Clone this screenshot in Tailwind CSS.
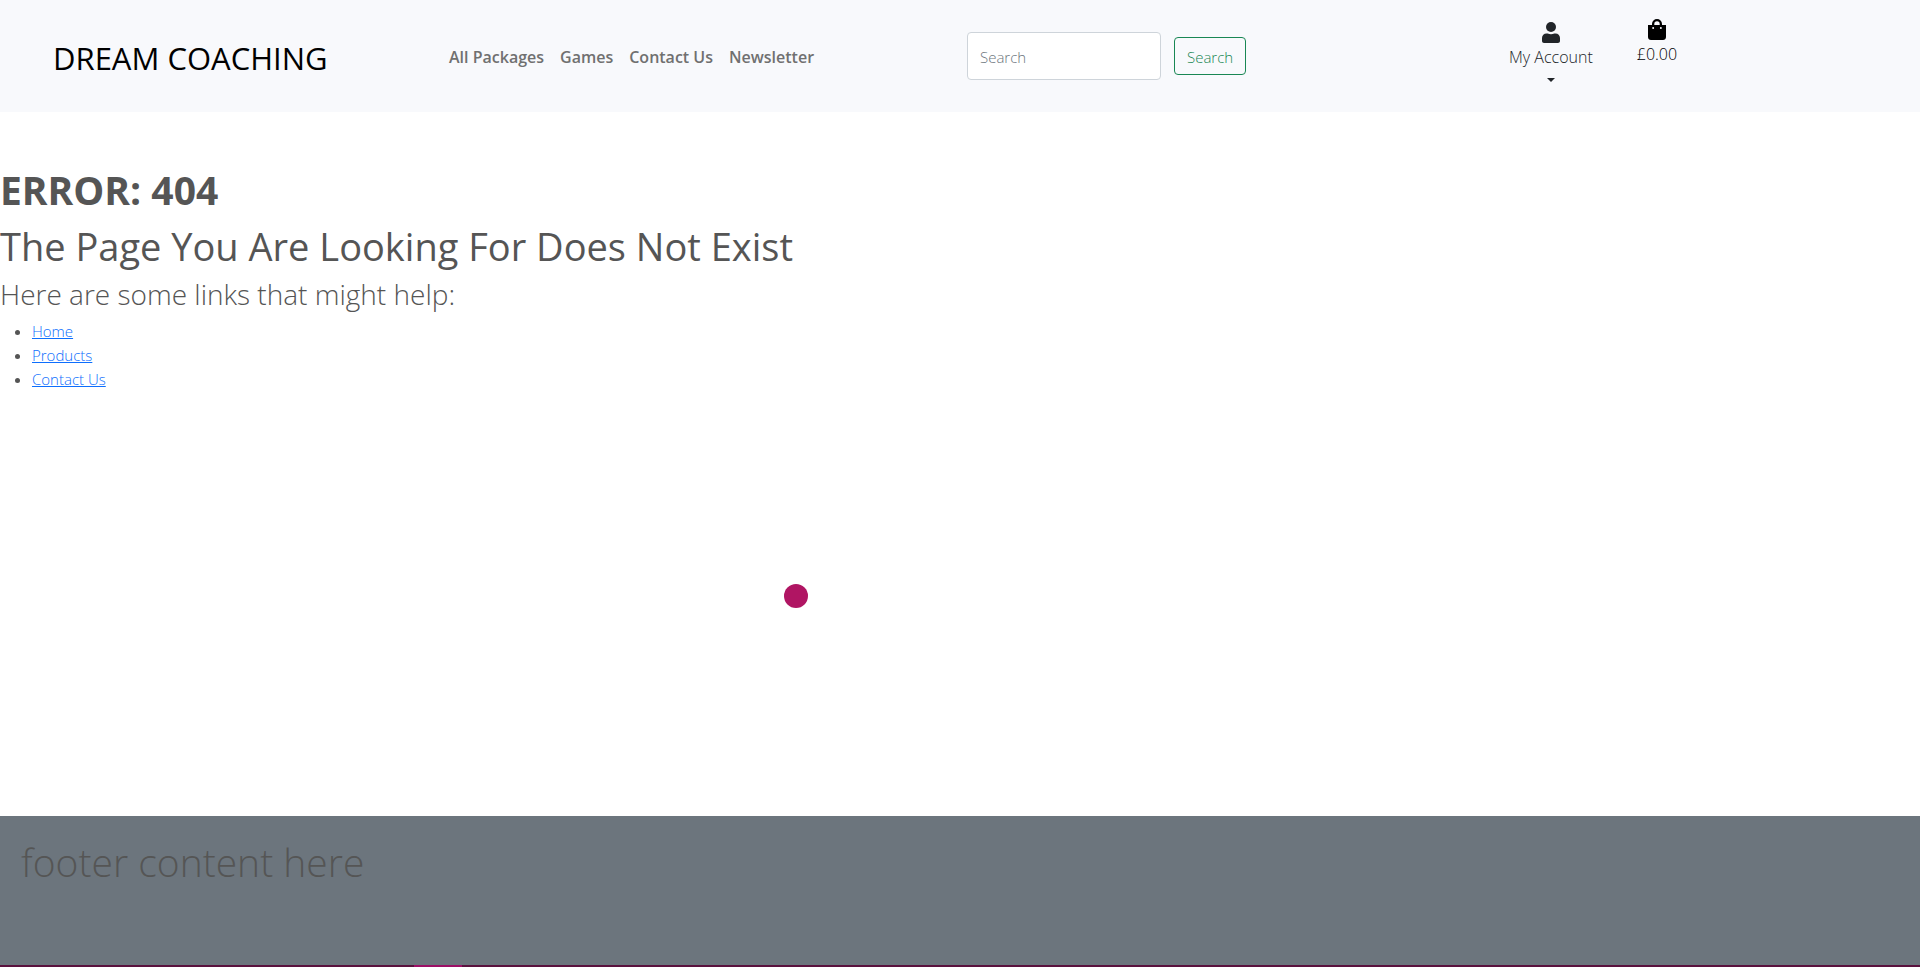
<!DOCTYPE html>
<html lang="en">
<head>
<meta charset="utf-8">
<title>Dream Coaching</title>
<script src="https://cdn.jsdelivr.net/npm/@tailwindcss/browser@4"></script>
</head>
<body class="relative flex min-h-screen flex-col overflow-x-hidden bg-white font-['Open_Sans','Noto_Sans',sans-serif] text-[#555555]">
<header class="flex h-28 items-center bg-[#f8f9fc]">
  <div class="w-[449px] pt-[3px] pl-[53px]"><a href="#" class="text-[31px] leading-10 text-black">DREAM COACHING</a></div>
  <nav class="flex w-[518px] gap-4 pt-[2px] text-base leading-6 font-semibold text-[#707070]">
    <a href="#">All Packages</a><a href="#">Games</a><a href="#">Contact Us</a><a href="#">Newsletter</a>
  </nav>
  <form class="flex w-[542px] items-center gap-[13px]" onsubmit="return false">
    <input type="search" aria-label="Search" placeholder="Search" class="h-12 w-[194px] rounded border border-[#ced4da] bg-white px-3 pt-[2px] text-[15px] font-light placeholder:text-[#6c757d]">
    <button type="submit" class="h-[38px] rounded border border-[#198754] px-3 pt-[2px] text-[15px] leading-6 font-light text-[#198754]">Search</button>
  </form>
  <div class="flex items-start gap-11 self-start pt-[19px] text-base leading-6 font-light">
    <button type="button" class="flex flex-col items-center pt-[3px] text-[#212529]">
      <svg class="h-[21px] w-[18px]" viewBox="0 0 18 21" fill="currentColor" aria-hidden="true"><circle cx="9" cy="5" r="5"/><path d="M4.500 11.500h1.200c2 1 4.600 1 6.600 0h1.200C16 11.500 18 13.500 18 16v3c0 1.100-.9 2-2 2H2c-1.100 0-2-.9-2-2v-3c0-2.500 2-4.500 4.500-4.500z"/></svg>
      <span class="mt-[2px]">My Account</span>
      <svg class="mt-[9px] h-1 w-2" viewBox="0 0 8 4" fill="currentColor" aria-hidden="true"><path d="M0 0h8L4 4z"/></svg>
    </button>
    <a href="#" class="flex flex-col items-center text-black">
      <svg class="h-[21px] w-[18px]" viewBox="0 0 18 21" fill="currentColor" aria-hidden="true"><path fill-rule="evenodd" d="M4 6V5a5 5 0 0 1 10 0v1h4V18c0 1.700-1.300 3-3 3H3c-1.700 0-3-1.300-3-3V6zM6.300 6h5.400V5a2.700 2.700 0 0 0-5.400 0zM5.150 8a1 1 0 1 0 0 2 1 1 0 0 0 0-2zM12.850 8a1 1 0 1 0 0 2 1 1 0 0 0 0-2z"/></svg>
      <span class="mt-[2px]">£0.00</span>
    </a>
  </div>
</header>
<main class="flex-1 pt-[54px]">
  <h1 class="mb-2 text-[39px] leading-12 font-bold">ERROR: 404</h1>
  <h2 class="mb-2 text-[38px] leading-12 font-normal">The Page You Are Looking For Does Not Exist</h2>
  <h3 class="mb-2 text-[28px] leading-8 font-light">Here are some links that might help:</h3>
  <ul class="list-disc pt-px pl-8 text-[15px] leading-6 font-light">
    <li><a href="#" class="text-[#0d6efd] underline">Home</a></li>
    <li><a href="#" class="text-[#0d6efd] underline">Products</a></li>
    <li><a href="#" class="text-[#0d6efd] underline">Contact Us</a></li>
  </ul>
</main>
<footer class="h-[149px] bg-[#6c757d] px-[21px] pt-[22px]"><p class="text-[39px] leading-12 font-light">footer content here</p></footer>
<div class="flex h-[2px] bg-[#5a123e]"><div class="ml-[414px] w-12 bg-[#9c0f66]"></div></div>
<div class="absolute top-[584px] left-[784px] size-6 rounded-full bg-[#b01563]"></div>
</body>
</html>
